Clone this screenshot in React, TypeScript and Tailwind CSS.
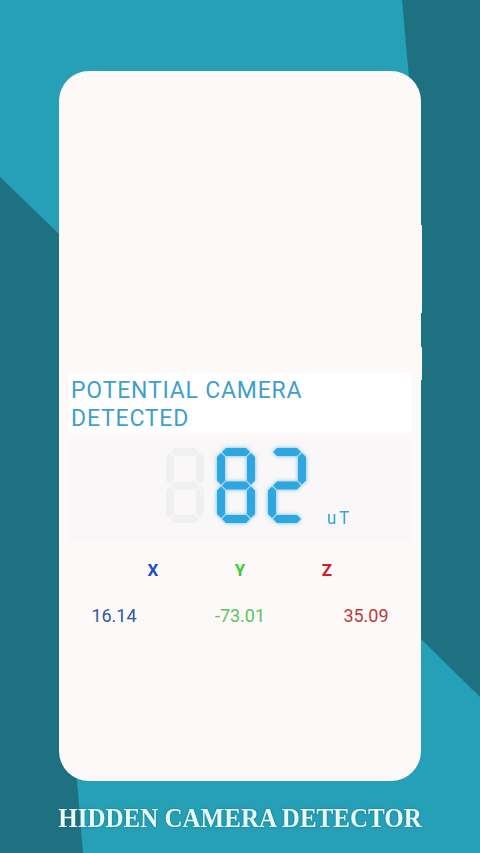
import React from 'react';

type Seg = 'a' | 'b' | 'c' | 'd' | 'e' | 'f' | 'g';

const DIGITS: Record<string, Seg[]> = {
    '8': ['a', 'b', 'c', 'd', 'e', 'f', 'g'],
    '2': ['a', 'b', 'g', 'e', 'd'],
};

const W = 38;
const H = 75;
const T = 8;

function hSeg(x1: number, x2: number, cy: number) {
    const h = T / 2;
    return `${x1},${cy} ${x1 + h},${cy - h} ${x2 - h},${cy - h} ${x2},${cy} ${x2 - h},${cy + h} ${x1 + h},${cy + h}`;
}

function vSeg(y1: number, y2: number, cx: number) {
    const h = T / 2;
    return `${cx},${y1} ${cx + h},${y1 + h} ${cx + h},${y2 - h} ${cx},${y2} ${cx - h},${y2 - h} ${cx - h},${y1 + h}`;
}

const SEGS: Record<Seg, string> = {
    a: hSeg(5, W - 5, 4),
    g: hSeg(5, W - 5, H / 2),
    d: hSeg(5, W - 5, H - 4),
    f: vSeg(5, H / 2 - 1, 4),
    b: vSeg(5, H / 2 - 1, W - 4),
    e: vSeg(H / 2 + 1, H - 5, 4),
    c: vSeg(H / 2 + 1, H - 5, W - 4),
};

function Digit({value, ghost}: {value: string; ghost?: boolean}) {
    const lit = DIGITS[value] ?? [];
    return (
        <svg width={W} height={H} viewBox={`0 0 ${W} ${H}`} className={ghost ? '' : 'drop-shadow-[0_0_2px_rgba(46,166,223,0.7)]'}>
            {(Object.keys(SEGS) as Seg[]).map((s) => (
                <polygon key={s} points={SEGS[s]} fill={ghost ? '#f1f0f0' : lit.includes(s) ? '#2ea6df' : 'transparent'} />
            ))}
        </svg>
    );
}

export default function App() {
    return (
        <div className="relative w-[480px] h-[853px] overflow-hidden bg-[#25a0b7]" style={{fontFamily: 'Roboto, "Noto Sans", sans-serif'}}>
            <svg className="absolute inset-0" width="480" height="853" viewBox="0 0 480 853">
                <polygon points="402,0 480,0 480,697 420,638 420,200" fill="#1e7181" />
                <polygon points="0,177 60,235 77,781 83,853 0,853" fill="#1e7181" />
            </svg>

            <div className="relative flex flex-col items-center">
                <div className="relative mt-[71px] w-[362px] h-[710px] rounded-[30px] bg-[#fcf9f8]">
                    <div className="absolute -right-[1px] top-[154px] w-[2px] h-[88px] bg-[#fcf9f8]" />
                    <div className="absolute -right-[1px] top-[276px] w-[2px] h-[33px] bg-[#fcf9f8]" />

                    <div className="flex flex-col pt-[302px]">
                        <div className="mx-[9px] h-[59px] bg-white pl-[3px] pt-[4px] text-[23px] tracking-[0.8px] leading-[28px] text-[#3f9ed0]">
                            <div>POTENTIAL CAMERA</div>
                            <div>DETECTED</div>
                        </div>

                        <div className="mx-[9px] mt-[5px] h-[105px] bg-[#f9f7f7] flex items-start pl-[98px] pt-[11px]">
                            <div className="flex gap-[13px]">
                                <Digit value="8" ghost />
                                <Digit value="8" />
                                <Digit value="2" />
                            </div>
                            <div className="ml-[21px] mt-[60px] text-[19px] tracking-[3px] leading-none text-[#2ea6df] scale-x-90 origin-left">uT</div>
                        </div>

                        <div className="flex justify-center mt-[20px] text-[17px] font-bold leading-none">
                            <div className="w-[87px] text-center text-[#1b4fcf]">X</div>
                            <div className="w-[87px] text-center text-[#3ccb3c]">Y</div>
                            <div className="w-[87px] text-center text-[#d0202e]">Z</div>
                        </div>

                        <div className="flex justify-center mt-[28px] text-[18px] leading-none">
                            <div className="w-[126px] shrink-0 text-center text-[#2f57a8]">16.14</div>
                            <div className="w-[126px] shrink-0 text-center text-[#58c658]">-73.01</div>
                            <div className="w-[126px] shrink-0 text-center text-[#b93b3b]">35.09</div>
                        </div>
                    </div>
                </div>

                <h1
                    className="mt-[24px] text-[25px] font-bold leading-none text-[#e8fbfa] scale-y-110 [text-shadow:0_0_2px_rgba(0,60,70,0.5)]"
                    style={{fontFamily: '"Liberation Serif", "Times New Roman", serif'}}
                >
                    HIDDEN CAMERA DETECTOR
                </h1>
            </div>
        </div>
    );
}
